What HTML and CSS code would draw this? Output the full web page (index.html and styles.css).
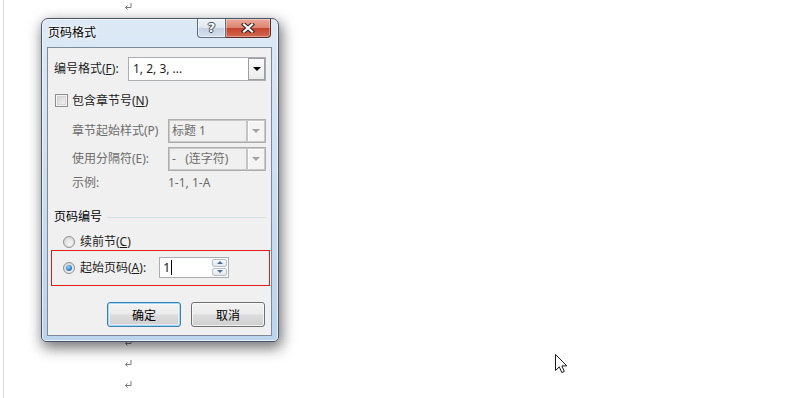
FILE: index.html
```html
<!DOCTYPE html>
<html lang="zh-CN">
<head>
  <meta charset="UTF-8" />
  <title>页码格式</title>
  <link rel="stylesheet" href="styles.css">
</head>
<body>
  <div class="page">
    <!-- paragraph marks of the document behind the dialog -->
    <div class="marks">
      <div class="mark"><svg width="8" height="7" viewBox="0 0 8 7"><path d="M7 0v4.5H1.5M3.5 2.5l-2 2 2 2" fill="none" stroke="#7a7a7a" stroke-width="1"/></svg></div>
      <div class="mark"><svg width="8" height="7" viewBox="0 0 8 7"><path d="M7 0v4.5H1.5M3.5 2.5l-2 2 2 2" fill="none" stroke="#7a7a7a" stroke-width="1"/></svg></div>
      <div class="mark"><svg width="8" height="7" viewBox="0 0 8 7"><path d="M7 0v4.5H1.5M3.5 2.5l-2 2 2 2" fill="none" stroke="#7a7a7a" stroke-width="1"/></svg></div>
      <div class="mark"><svg width="8" height="7" viewBox="0 0 8 7"><path d="M7 0v4.5H1.5M3.5 2.5l-2 2 2 2" fill="none" stroke="#7a7a7a" stroke-width="1"/></svg></div>
      <div class="mark"><svg width="8" height="7" viewBox="0 0 8 7"><path d="M7 0v4.5H1.5M3.5 2.5l-2 2 2 2" fill="none" stroke="#7a7a7a" stroke-width="1"/></svg></div>
      <div class="mark"><svg width="8" height="7" viewBox="0 0 8 7"><path d="M7 0v4.5H1.5M3.5 2.5l-2 2 2 2" fill="none" stroke="#7a7a7a" stroke-width="1"/></svg></div>
      <div class="mark"><svg width="8" height="7" viewBox="0 0 8 7"><path d="M7 0v4.5H1.5M3.5 2.5l-2 2 2 2" fill="none" stroke="#7a7a7a" stroke-width="1"/></svg></div>
      <div class="mark"><svg width="8" height="7" viewBox="0 0 8 7"><path d="M7 0v4.5H1.5M3.5 2.5l-2 2 2 2" fill="none" stroke="#7a7a7a" stroke-width="1"/></svg></div>
      <div class="mark"><svg width="8" height="7" viewBox="0 0 8 7"><path d="M7 0v4.5H1.5M3.5 2.5l-2 2 2 2" fill="none" stroke="#7a7a7a" stroke-width="1"/></svg></div>
      <div class="mark"><svg width="8" height="7" viewBox="0 0 8 7"><path d="M7 0v4.5H1.5M3.5 2.5l-2 2 2 2" fill="none" stroke="#7a7a7a" stroke-width="1"/></svg></div>
      <div class="mark"><svg width="8" height="7" viewBox="0 0 8 7"><path d="M7 0v4.5H1.5M3.5 2.5l-2 2 2 2" fill="none" stroke="#7a7a7a" stroke-width="1"/></svg></div>
      <div class="mark"><svg width="8" height="7" viewBox="0 0 8 7"><path d="M7 0v4.5H1.5M3.5 2.5l-2 2 2 2" fill="none" stroke="#7a7a7a" stroke-width="1"/></svg></div>
      <div class="mark"><svg width="8" height="7" viewBox="0 0 8 7"><path d="M7 0v4.5H1.5M3.5 2.5l-2 2 2 2" fill="none" stroke="#7a7a7a" stroke-width="1"/></svg></div>
      <div class="mark"><svg width="8" height="7" viewBox="0 0 8 7"><path d="M7 0v4.5H1.5M3.5 2.5l-2 2 2 2" fill="none" stroke="#7a7a7a" stroke-width="1"/></svg></div>
      <div class="mark"><svg width="8" height="7" viewBox="0 0 8 7"><path d="M7 0v4.5H1.5M3.5 2.5l-2 2 2 2" fill="none" stroke="#7a7a7a" stroke-width="1"/></svg></div>
      <div class="mark"><svg width="8" height="7" viewBox="0 0 8 7"><path d="M7 0v4.5H1.5M3.5 2.5l-2 2 2 2" fill="none" stroke="#7a7a7a" stroke-width="1"/></svg></div>
      <div class="mark"><svg width="8" height="7" viewBox="0 0 8 7"><path d="M7 0v4.5H1.5M3.5 2.5l-2 2 2 2" fill="none" stroke="#7a7a7a" stroke-width="1"/></svg></div>
      <div class="mark"><svg width="8" height="7" viewBox="0 0 8 7"><path d="M7 0v4.5H1.5M3.5 2.5l-2 2 2 2" fill="none" stroke="#7a7a7a" stroke-width="1"/></svg></div>
      <div class="mark"><svg width="8" height="7" viewBox="0 0 8 7"><path d="M7 0v4.5H1.5M3.5 2.5l-2 2 2 2" fill="none" stroke="#7a7a7a" stroke-width="1"/></svg></div>
    </div>

    <!-- Page number format dialog -->
    <div class="dialog">
      <div class="titlebar">
        <span class="title">页码格式</span>
        <div class="caption-btns">
          <span class="btn-help">?</span>
          <span class="btn-close">
            <svg width="14" height="10" viewBox="0 0 14 10">
              <path d="M3 1.5l8 7M11 1.5l-8 7" stroke="#3b2020" stroke-width="4.2" stroke-linecap="square"/>
              <path d="M3 1.5l8 7M11 1.5l-8 7" stroke="#fff" stroke-width="2.2" stroke-linecap="square"/>
            </svg>
          </span>
        </div>
      </div>

      <div class="client">
        <div class="row-format">
          <span>编号格式(<u>F</u>):</span>
          <div class="combo combo-main">
            <span class="combo-text">1, 2, 3, ...</span>
            <span class="combo-btn"><i class="tri"></i></span>
          </div>
        </div>

        <div class="row-check">
          <span class="checkbox"></span>
          <span class="check-label">包含章节号(<u>N</u>)</span>
        </div>

        <div class="field-row first">
          <span class="field-label">章节起始样式(P)</span>
          <div class="combo combo-off">
            <span class="combo-text">标题 1</span>
            <span class="combo-btn"><i class="tri"></i></span>
          </div>
        </div>
        <div class="field-row">
          <span class="field-label">使用分隔符(E):</span>
          <div class="combo combo-off">
            <span class="combo-text">-&nbsp;&nbsp;&nbsp;(连字符)</span>
            <span class="combo-btn"><i class="tri"></i></span>
          </div>
        </div>
        <div class="example-row">
          <span class="field-label">示例:</span>
          <span>1-1, 1-A</span>
        </div>

        <div class="group-row">
          <span>页码编号</span>
          <span class="group-line"></span>
        </div>

        <div class="radio-row">
          <span class="radio"></span>
          <span class="radio-label">续前节(<u>C</u>)</span>
        </div>
        <div class="radio-row highlight">
          <span class="radio checked"></span>
          <span class="radio-label wide">起始页码(<u>A</u>):</span>
          <div class="spin">
            <span class="spin-text">1<i class="caret"></i></span>
            <span class="spin-btns">
              <span class="spin-up"><i class="tri-up"></i></span>
              <span class="spin-down"><i class="tri-down"></i></span>
            </span>
          </div>
        </div>

        <div class="actions">
          <button class="btn btn-default">确定</button>
          <button class="btn">取消</button>
        </div>
      </div>
    </div>

    <svg class="cursor" width="13" height="20" viewBox="0 0 13 20">
      <path d="M0.5 0.5V16.5L4.3 12.8L6.8 18.6L9.3 17.5L6.9 11.9H11.8Z" fill="#fff" stroke="#1a1a1a" stroke-width="1" stroke-linejoin="miter"/>
    </svg>
  </div>
</body>
</html>
```

FILE: styles.css
```css
* {
  box-sizing: border-box;
  margin: 0;
  padding: 0;
}
body {
  background: #fff;
  font-family: "Noto Sans", "Noto Sans CJK SC", sans-serif;
  font-size: 12px;
  line-height: 16px;
  color: #1e1e1e;
  overflow: hidden;
}
u {
  text-decoration: underline;
  text-underline-offset: 1px;
}
.page {
  position: relative;
  height: 398px;
  margin-left: 3px;
  border-left: 1px solid #dcdcdc;
}

/* paragraph marks */
.marks {
  padding-left: 120px;
}
.mark {
  height: 21px;
  padding-top: 3px;
}
.mark svg {
  display: block;
}

/* window frame */
.dialog {
  position: absolute;
  left: 37px;
  top: 18px;
  width: 238px;
  height: 324px;
  display: flex;
  flex-direction: column;
  padding: 0 6px 5px 5px;
  border: 1px solid #47566a;
  border-radius: 7px 7px 5px 5px;
  background: linear-gradient(180deg, #dde9f5 0%, #d3e3f3 30%, #c5daef 70%, #bcd4ec 100%);
  box-shadow: inset 0 0 0 1px rgba(255, 255, 255, 0.6), 2px 5px 14px 1px rgba(0, 0, 0, 0.55);
}
.titlebar {
  height: 28px;
  display: flex;
  justify-content: space-between;
  align-items: flex-start;
}
.title {
  padding: 7px 0 0 1px;
  line-height: 14px;
  color: #000;
  text-shadow: 0 0 6px #fff, 0 0 3px #fff;
}
.caption-btns {
  display: flex;
  margin-right: 1px;
}
.btn-help {
  width: 29px;
  height: 19px;
  border: 1px solid #5e6e7f;
  border-top: none;
  border-radius: 0 0 0 4px;
  background: linear-gradient(180deg, #eef3f8 0%, #dde6ef 48%, #c4d2e1 52%, #d3dfeb 100%);
  box-shadow: inset 0 0 0 1px rgba(255, 255, 255, 0.55);
  text-align: center;
  font-family: "DejaVu Sans", sans-serif;
  font-weight: bold;
  font-size: 13px;
  line-height: 18px;
  color: #fff;
  text-shadow: 1px 0 0 #3d4754, -1px 0 0 #3d4754, 0 1px 0 #3d4754, 0 -1px 0 #3d4754;
}
.btn-close {
  width: 45px;
  height: 19px;
  display: flex;
  align-items: center;
  justify-content: center;
  border: 1px solid #5c2c26;
  border-top: none;
  border-left: none;
  border-radius: 0 0 4px 0;
  background: linear-gradient(180deg, #eaa899 0%, #dc8570 48%, #c4432c 52%, #d26a52 100%);
  box-shadow: inset 0 0 0 1px rgba(255, 255, 255, 0.35);
}

/* client area */
.client {
  height: 289px;
  padding: 9px 5px 0 6px;
  background: #f0f0f0;
  border: 1px solid #7e8a97;
}
.row-format {
  height: 24px;
  display: flex;
  align-items: center;
}
.combo {
  display: flex;
  align-items: stretch;
  height: 24px;
  margin-left: auto;
}
.combo-main {
  width: 138px;
  background: #fff;
  border: 1px solid #abadb3;
}
.combo-text {
  flex: 1;
  padding-left: 4px;
  line-height: 22px;
  white-space: nowrap;
  overflow: hidden;
}
.combo-btn {
  width: 17px;
  display: flex;
  align-items: center;
  justify-content: center;
}
.combo-main .combo-btn {
  border: 1px solid #9b9fa4;
  background: linear-gradient(180deg, #fbfbfb, #ececec);
}
.tri {
  width: 0;
  height: 0;
  border-left: 4px solid transparent;
  border-right: 4px solid transparent;
  border-top: 4px solid #000;
}
.combo-off {
  width: 98px;
  background: #f0f0f0;
  border: 1px solid #adadad;
  box-shadow: inset 0 0 0 1px #c9c9c9;
  color: #6d6d6d;
}
.combo-off .combo-text {
  padding-left: 3px;
}
.combo-off .combo-btn {
  width: 18px;
  margin: 1px;
  border-left: 2px solid #c4c4c4;
  background: #f4f4f4;
  box-shadow: inset 1px 1px 0 #fff;
}
.combo-off .tri {
  border-top-color: #a4a4a4;
}

.row-check {
  margin-top: 13px;
  height: 13px;
  display: flex;
  align-items: center;
}
.checkbox {
  width: 13px;
  height: 13px;
  margin-left: 1px;
  border: 1px solid #8e8f8f;
  background: linear-gradient(135deg, #cfcfcf, #f7f7f7);
  box-shadow: inset 0 0 0 1px #f4f4f4, inset 0 0 0 2px #d6d6d6;
}
.check-label {
  margin-left: 4px;
}

.field-row {
  height: 24px;
  margin-top: 4px;
  display: flex;
  align-items: center;
  padding-left: 18px;
  color: #6d6d6d;
}
.field-row.first {
  margin-top: 12px;
}
.field-label {
  width: 96px;
  flex: none;
}
.field-row .combo {
  margin-left: 0;
}
.example-row {
  height: 18px;
  margin-top: 3px;
  display: flex;
  align-items: center;
  padding-left: 18px;
  color: #6d6d6d;
}

.group-row {
  height: 16px;
  margin-top: 17px;
  display: flex;
  align-items: center;
  color: #000;
}
.group-line {
  flex: 1;
  height: 1px;
  margin-left: 5px;
  background: #d5dfe5;
}

.radio-row {
  height: 16px;
  margin-top: 9px;
  display: flex;
  align-items: center;
  padding-left: 9px;
}
.radio {
  width: 12px;
  height: 12px;
  flex: none;
  border-radius: 50%;
  border: 1px solid #8e8f8f;
  background: radial-gradient(circle at 60% 65%, #f8f8f8, #cdcdcd);
  display: flex;
  align-items: center;
  justify-content: center;
}
.radio.checked::after {
  content: "";
  width: 6px;
  height: 6px;
  border-radius: 50%;
  background: radial-gradient(circle at 40% 35%, #9fd2f6 0%, #2f86d3 55%, #1a4f8c 100%);
}
.radio-label {
  margin-left: 5px;
}
.radio-label.wide {
  width: 79px;
  flex: none;
}
.highlight {
  height: 36px;
  margin: 0 -4px 0 -3px;
  padding-left: 11px;
  border: 1px solid #e31b1b;
}

.spin {
  width: 70px;
  height: 21px;
  margin-top: -2px;
  display: flex;
  border: 1px solid #abadb3;
  background: #fff;
}
.spin-text {
  flex: 1;
  display: flex;
  align-items: center;
  padding-left: 3px;
  font-size: 13px;
}
.caret {
  width: 1px;
  height: 15px;
  margin-left: 1px;
  background: #000;
}
.spin-btns {
  width: 15px;
  margin: 1px;
  display: flex;
  flex-direction: column;
  gap: 1px;
}
.spin-up,
.spin-down {
  flex: 1;
  display: flex;
  align-items: center;
  justify-content: center;
  border: 1px solid #b6bfc9;
  border-radius: 2px;
  background: linear-gradient(180deg, #f7f9fb, #e1e7ee);
}
.tri-up {
  border-left: 3px solid transparent;
  border-right: 3px solid transparent;
  border-bottom: 3px solid #4d6b8f;
}
.tri-down {
  border-left: 3px solid transparent;
  border-right: 3px solid transparent;
  border-top: 3px solid #4d6b8f;
}

.actions {
  margin-top: 16px;
  padding-right: 1px;
  display: flex;
  justify-content: flex-end;
  gap: 10px;
}
.btn {
  width: 74px;
  height: 25px;
  font-family: inherit;
  font-size: 12px;
  color: #000;
  border: 1px solid #707070;
  border-radius: 3px;
  background: linear-gradient(180deg, #f2f2f2 0%, #ebebeb 48%, #dddddd 52%, #cfcfcf 100%);
  box-shadow: inset 0 0 0 1px rgba(255, 255, 255, 0.7);
}
.btn-default {
  border-color: #3c7fb1;
  box-shadow: inset 0 0 0 1px #9fd7f7, inset 0 0 0 2px rgba(255, 255, 255, 0.5);
}

.cursor {
  position: absolute;
  left: 551px;
  top: 354px;
}
```
